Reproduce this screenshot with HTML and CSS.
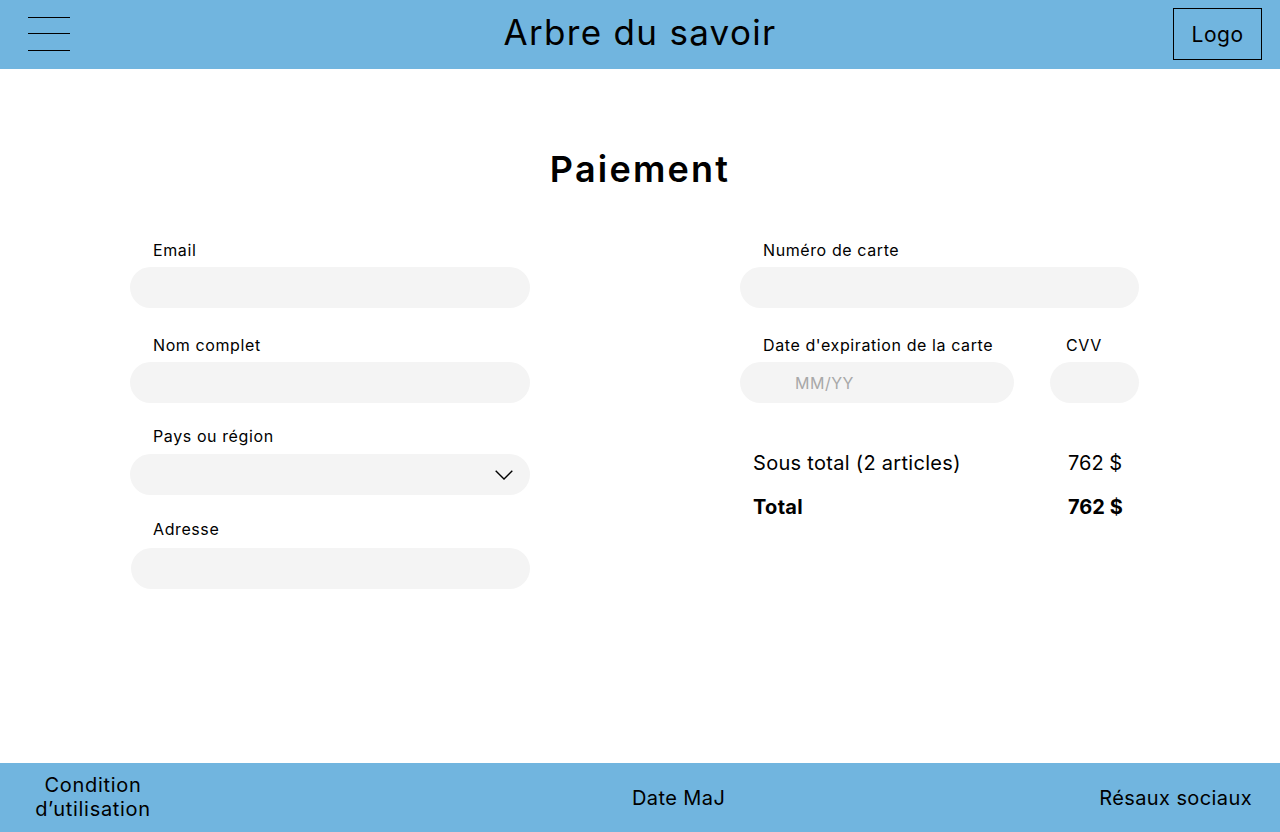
FILE: index.html
```html
<!DOCTYPE html>
<html lang="fr">
<head>
<meta charset="utf-8">
<title>Paiement - Arbre du savoir</title>
<link rel="stylesheet" href="styles.css">
</head>
<body>
<div class="page">
  <header class="topbar">
    <button class="burger" aria-label="Menu">
      <span></span><span></span><span></span>
    </button>
    <h1 class="site-title">Arbre du savoir</h1>
    <div class="logo-box">Logo</div>
  </header>

  <main class="main">
    <h2 class="page-title">Paiement</h2>
    <div class="form-grid">
      <div class="col">
        <div class="field f-email">
          <label class="label">Email</label>
          <div class="input"></div>
        </div>
        <div class="field f-name">
          <label class="label">Nom complet</label>
          <div class="input"></div>
        </div>
        <div class="field f-country">
          <label class="label">Pays ou région</label>
          <div class="input select">
            <svg class="chevron" width="18" height="10" viewBox="0 0 18 10"><path d="M0.7 0.7 L9 9 L17.3 0.7" fill="none" stroke="#000" stroke-width="1.4"/></svg>
          </div>
        </div>
        <div class="field f-address">
          <label class="label">Adresse</label>
          <div class="input"></div>
        </div>
      </div>
      <div class="col">
        <div class="field f-email">
          <label class="label">Numéro de carte</label>
          <div class="input"></div>
        </div>
        <div class="row-fields">
          <div class="field exp">
            <label class="label">Date d'expiration de la carte</label>
            <div class="input"><span class="placeholder">MM/YY</span></div>
          </div>
          <div class="field cvv">
            <label class="label">CVV</label>
            <div class="input"></div>
          </div>
        </div>
        <div class="summary">
          <span>Sous total (2 articles)</span><span class="amount">762 $</span>
          <strong>Total</strong><strong class="amount">762 $</strong>
        </div>
      </div>
    </div>
  </main>

  <footer class="footer">
    <div class="foot-left">Condition<br>d’utilisation</div>
    <div class="foot-mid">Date MaJ</div>
    <div class="foot-right">Résaux sociaux</div>
  </footer>
</div>
</body>
</html>
```

FILE: styles.css
```css
* { box-sizing: border-box; }
html, body { margin: 0; padding: 0; }
body {
  font-family: "Inter", "DejaVu Sans", sans-serif;
  color: #000;
  background: #fff;
}
.page {
  width: 1280px;
  height: 832px;
  display: flex;
  flex-direction: column;
}
.topbar {
  height: 69px;
  background: #71b5df;
  display: grid;
  grid-template-columns: 1fr auto 1fr;
  align-items: center;
}
.burger {
  justify-self: start;
  margin-left: 28px;
  width: 42px;
  height: 34px;
  padding: 0;
  border: 0;
  background: transparent;
  display: flex;
  flex-direction: column;
  justify-content: space-between;
  margin-bottom: 2px;
}
.burger span {
  display: block;
  height: 1px;
  background: #000;
}
.site-title {
  margin: 0 0 4px 0;
  font-weight: 400;
  font-size: 35px;
  letter-spacing: 1.3px;
  line-height: 1;
}
.logo-box {
  justify-self: end;
  margin-right: 18px;
  width: 89px;
  height: 52px;
  border: 1px solid #000;
  display: flex;
  align-items: center;
  justify-content: center;
  font-size: 21px;
  letter-spacing: 0.5px;
  margin-bottom: 1px;
}
.main {
  flex: 1;
  padding-top: 78px;
}
.page-title {
  margin: 0;
  text-align: center;
  font-size: 36px;
  font-weight: 600;
  line-height: 44px;
  letter-spacing: 2.2px;
}
.form-grid {
  margin: 49px 0 0 130px;
  display: grid;
  grid-template-columns: 400px 399px;
  column-gap: 210px;
}
.col {
  display: flex;
  flex-direction: column;
}
.field {
  display: flex;
  flex-direction: column;
  margin-bottom: 27px;
}
.f-name { margin-bottom: 23px; }
.f-country { margin-bottom: 24px; }
.f-country .label { margin-bottom: 8px; }
.f-address .label { margin-bottom: 9px; }
.f-address .input { margin-left: 1px; }
.label {
  font-size: 16px;
  line-height: 20px;
  padding-left: 23px;
  margin-bottom: 7px;
  letter-spacing: 0.6px;
}
.input {
  height: 41px;
  border-radius: 21px;
  background: #f4f4f4;
  display: flex;
  align-items: center;
}
.select {
  justify-content: flex-end;
  padding-right: 16px;
}
.chevron { margin-right: 1px; }
.row-fields {
  display: flex;
  gap: 36px;
}
.exp { width: 274px; }
.cvv { width: 89px; }
.cvv .label { padding-left: 16px; }
.placeholder {
  padding-left: 55px;
  font-size: 16px;
  color: #a8a8a8;
  letter-spacing: 0.5px;
}
.summary {
  margin-top: 21px;
  padding-left: 13px;
  display: grid;
  grid-template-columns: 315px auto;
  row-gap: 20px;
  font-size: 20px;
  line-height: 24px;
  letter-spacing: 0.3px;
}
.summary .amount { letter-spacing: 0; }
.summary strong { font-weight: 700; }
.footer {
  height: 69px;
  background: #71b5df;
  display: flex;
  align-items: center;
  font-size: 20px;
  line-height: 24px;
  letter-spacing: 0.4px;
}
.foot-left {
  width: 186px;
  text-align: center;
  margin-top: -2px;
  letter-spacing: 0.7px;
}
.foot-mid {
  margin-left: 446px;
}
.foot-right {
  margin-left: auto;
  margin-right: 28px;
}
```
